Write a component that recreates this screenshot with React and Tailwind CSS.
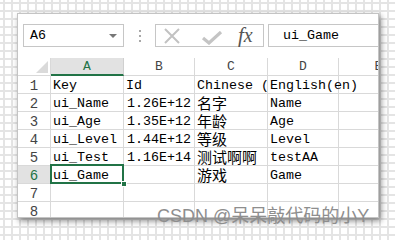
import React from 'react';

const mono = "font-['Liberation_Mono','Noto_Sans_CJK_SC',monospace]";

const cols = ['A', 'B', 'C', 'D', 'E'];

const rows = [
  { n: 1, cells: ['Key', 'Id', 'Chinese (zh)', 'English(en)', ''] },
  { n: 2, cells: ['ui_Name', '1.26E+12', '名字', 'Name', ''] },
  { n: 3, cells: ['ui_Age', '1.35E+12', '年龄', 'Age', ''] },
  { n: 4, cells: ['ui_Level', '1.44E+12', '等级', 'Level', ''] },
  { n: 5, cells: ['ui_Test', '1.16E+14', '测试啊啊', 'testAA', ''] },
  { n: 6, cells: ['ui_Game', '', '游戏', 'Game', ''] },
  { n: 7, cells: ['', '', '', '', ''] },
  { n: 8, cells: ['', '', '', '', ''] },
];

const isCjk = (s) => /[\u4e00-\u9fff]/.test(s);
const isNum = (s) => /^[\d.E+]+$/.test(s);

const Cell = ({ value, col, selected }) => {
  const numeric = isNum(value);
  return (
    <div
      className={`relative h-[18px] border-r border-b border-[#d9d9d9] ${
        col === 2 ? 'overflow-hidden' : 'overflow-visible'
      } ${col === 3 ? 'bg-white z-10' : ''}`}
    >
      {value !== '' && (
        <div
          className={`whitespace-nowrap text-black ${
            numeric ? 'text-right pr-[3px]' : 'pl-[2px]'
          } ${
            isCjk(value)
              ? "text-[15px] leading-[18px] font-['Noto_Sans_CJK_SC',sans-serif]"
              : `${mono} text-[13.33px] leading-[16px] pt-[2px]`
          }`}
        >
          {value}
        </div>
      )}
      {selected && (
        <>
          <div className="absolute left-[-1px] top-[-2px] right-[-1px] bottom-[-1px] border-2 border-[#217346] z-20" />
          <div className="absolute right-[-4px] bottom-[-4px] w-[6px] h-[6px] bg-[#217346] border border-white z-30" />
        </>
      )}
    </div>
  );
};

const Backdrop = () => (
  <>
    <div className="absolute inset-0 flex gap-[6px] pl-[3px]">
      {Array.from({ length: 50 }, (_, i) => (
        <div key={i} className="w-[2px] h-full shrink-0 bg-[#e4e4e4]" />
      ))}
    </div>
    <div className="absolute inset-0 flex flex-col gap-[6px] pt-[2px]">
      {Array.from({ length: 30 }, (_, i) => (
        <div key={i} className="h-[2px] w-full shrink-0 bg-[#e4e4e4]" />
      ))}
    </div>
  </>
);

export default function App() {
  return (
    <div className="relative w-[395px] h-[240px] overflow-hidden bg-white">
      <Backdrop />

      <div className="relative isolate ml-[17px] mt-[13px] w-[362px] h-[205px] bg-white border border-[#c4c4c4] shadow-[2px_3px_6px_rgba(0,0,0,0.45)] overflow-hidden flex flex-col">
        {/* formula bar */}
        <div className="flex items-start h-[44px] pl-[5px] pt-[10px] shrink-0">
          <div className="relative w-[101px] h-[23px] border border-[#c6c6c6] flex items-center pl-[6px]">
            <span className={`${mono} text-[13.33px] text-black`}>A6</span>
            <div className="absolute right-[6px] top-[9px] w-0 h-0 border-l-[4px] border-r-[4px] border-t-[4px] border-l-transparent border-r-transparent border-t-[#777]" />
          </div>
          <div className="w-[31px] h-[23px] flex flex-col items-center justify-center gap-[3px]">
            <div className="w-[2px] h-[2px] bg-[#a8a8a8]" />
            <div className="w-[2px] h-[2px] bg-[#a8a8a8]" />
            <div className="w-[2px] h-[2px] bg-[#a8a8a8]" />
          </div>
          <div className="w-[109px] h-[23px] border border-[#c6c6c6] flex items-center">
            <svg width="18" height="16" viewBox="0 0 18 16" className="ml-[7px]">
              <path d="M2 1 L16 15 M16 1 L2 15" stroke="#c2c2c2" strokeWidth="2" fill="none" />
            </svg>
            <svg width="22" height="14" viewBox="0 0 22 14" className="ml-[20px] mt-[4px]">
              <path d="M2 7 L8 12 L20 1" stroke="#c4c4c4" strokeWidth="3.2" fill="none" />
            </svg>
            <span className="ml-[15px] text-[20px] leading-none italic text-[#555] font-['Liberation_Serif',serif]">
              <span className="text-[21px]">f</span>x
            </span>
          </div>
          <div className="ml-[4px] flex-1 h-[23px] border-t border-b border-l border-[#c6c6c6] flex items-center pl-[14px]">
            <span className={`${mono} text-[13.33px] text-black`}>ui_Game</span>
          </div>
        </div>

        {/* sheet */}
        <div className="grid grid-cols-[33px_73px_71px_73px_71px_80px]">
          <div className="h-[18px] border-r border-b border-[#d9d9d9] flex items-end justify-end pr-[2px] pb-[2px]">
            <svg width="12" height="12" viewBox="0 0 12 12">
              <path d="M12 0 L12 12 L0 12 Z" fill="#dadada" />
            </svg>
          </div>
          {cols.map((c, i) => (
            <div
              key={c}
              className={`h-[18px] border-r flex justify-center ${mono} text-[13px] leading-[17px] ${
                i === 0
                  ? 'bg-[#e2e2e2] border-b-2 border-b-[#217346] border-r-[#d0d0d0] text-[#217346]'
                  : 'border-b border-[#d9d9d9] text-[#444]'
              }`}
            >
              {c}
            </div>
          ))}
          {rows.map((r) => (
            <React.Fragment key={r.n}>
              <div
                className={`h-[18px] border-r border-b border-[#d9d9d9] flex justify-center ${mono} text-[14px] leading-[16px] pt-[2px] ${
                  r.n === 6 ? 'bg-[#e2e2e2] text-[#217346]' : 'text-[#444]'
                }`}
              >
                {r.n}
              </div>
              {r.cells.map((v, ci) => (
                <Cell key={ci} value={v} col={ci} selected={r.n === 6 && ci === 0} />
              ))}
            </React.Fragment>
          ))}
        </div>
      </div>

      <div className="absolute z-50 left-[157px] top-[206px] text-[18px] leading-[20px] whitespace-nowrap text-[#8e8e8e] font-['Liberation_Sans','Noto_Sans_CJK_SC',sans-serif]">
        CSDN @呆呆敲代码的小Y
      </div>
    </div>
  );
}
